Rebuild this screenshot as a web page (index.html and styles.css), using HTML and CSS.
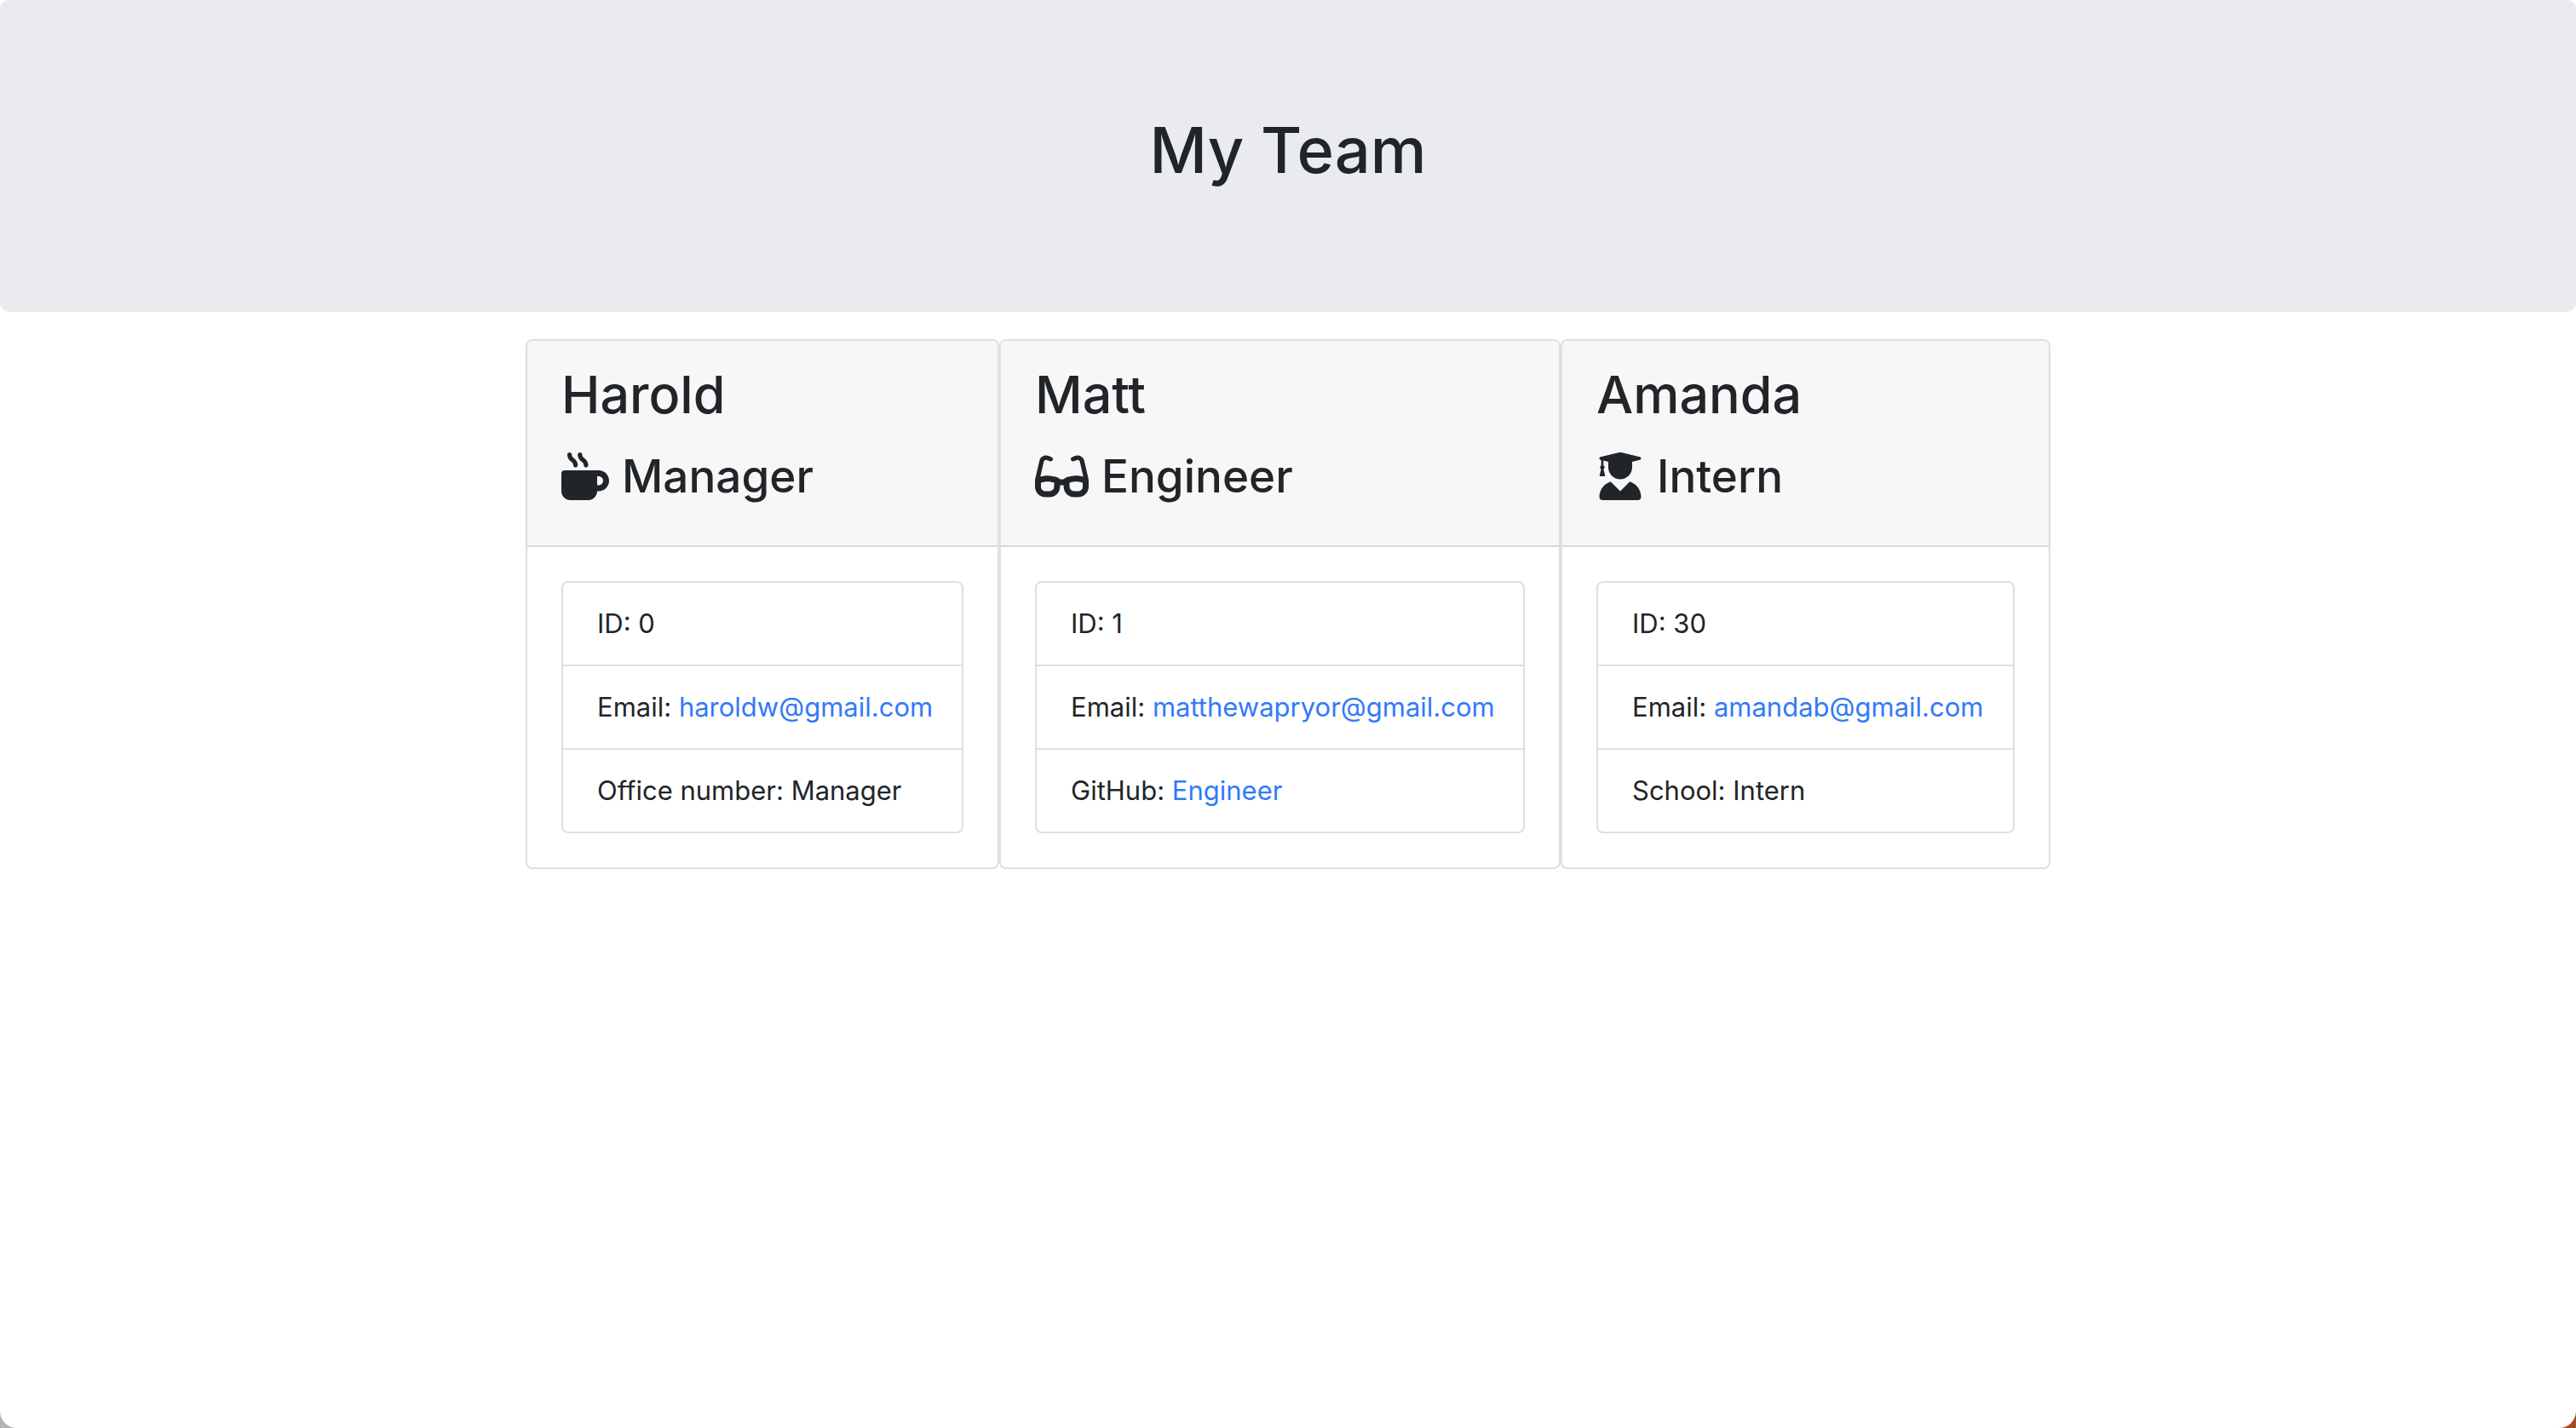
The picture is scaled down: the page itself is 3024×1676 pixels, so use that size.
FILE: index.html
```html
<!DOCTYPE html>
<html lang="en">
<head>
<meta charset="utf-8">
<title>My Team</title>
<link rel="stylesheet" href="styles.css">
</head>
<body>
<header class="banner"><h1 class="banner-title">My Team</h1></header>
<main class="team">
  <section class="card">
    <div class="card-header">
      <h2 class="name">Harold</h2>
      <h3 class="role"><svg class="icon" viewBox="0 0 512 512" aria-hidden="true"><path d="M88 0C74.7 0 64 10.7 64 24c0 38.9 23.4 59.4 39.1 73.1l1.1 1C120.5 112.3 128 119.9 128 136c0 13.3 10.7 24 24 24s24-10.7 24-24c0-38.9-23.4-59.4-39.1-73.1l-1.1-1C119.5 47.7 112 40.1 112 24c0-13.3-10.7-24-24-24zM32 192c-17.7 0-32 14.3-32 32V416c0 53 43 96 96 96H288c53 0 96-43 96-96h16c61.9 0 112-50.1 112-112s-50.1-112-112-112H352 32zm352 64h16c26.5 0 48 21.5 48 48s-21.5 48-48 48H384V256zM224 24c0-13.3-10.7-24-24-24s-24 10.7-24 24c0 38.9 23.4 59.4 39.1 73.1l1.1 1C232.5 112.3 240 119.9 240 136c0 13.3 10.7 24 24 24s24-10.7 24-24c0-38.9-23.4-59.4-39.1-73.1l-1.1-1C231.5 47.7 224 40.1 224 24z"/></svg>Manager</h3>
    </div>
    <div class="card-body">
      <ul class="facts">
        <li>ID: 0</li>
        <li>Email: <a href="mailto:haroldw@gmail.com">haroldw@gmail.com</a></li>
        <li>Office number: Manager</li>
      </ul>
    </div>
  </section>
  <section class="card">
    <div class="card-header">
      <h2 class="name">Matt</h2>
      <h3 class="role"><svg class="icon" viewBox="0 0 576 512" aria-hidden="true"><path d="M118.6 80c-11.5 0-21.4 7.9-24 19.1L57 260.3c20.5-6.2 48.3-12.3 78.7-12.3c32.3 0 61.8 6.9 82.8 13.5c10.6 3.3 19.3 6.7 25.4 9.2c3.1 1.3 5.5 2.4 7.3 3.2c7 3.4 12.7 8 16.4 14.1h40.6c3.7-6.1 9.4-10.7 16.4-14.1c1.8-.8 4.2-1.9 7.3-3.2c6.1-2.6 14.8-5.9 25.4-9.2c21-6.6 50.4-13.5 82.8-13.5c30.4 0 58.2 6.1 78.7 12.3L481.4 99.1c-2.6-11.2-12.6-19.1-24-19.1c-3.1 0-6.2 .6-9.2 1.8L416.9 94.3c-12.3 4.9-26.3-1.1-31.2-13.4s1.1-26.3 13.4-31.2l31.3-12.5c8.6-3.4 17.7-5.2 27-5.2c33.8 0 63.1 23.3 70.8 56.2l43.9 188c1.7 7.3 2.9 14.7 3.5 22.1c.3 1.9 .5 3.8 .5 5.7v64c0 61.9-50.1 112-112 112H419.7c-59.4 0-108.5-46.4-111.8-105.8L306.6 352H269.4l-1.2 22.2C264.9 433.6 215.8 480 156.3 480H112C50.1 480 0 429.9 0 368V304c0-1.9 .2-3.8 .5-5.7c.6-7.4 1.8-14.8 3.5-22.1l43.9-188C55.5 55.3 84.8 32 118.6 32c9.2 0 18.4 1.8 27 5.2l31.3 12.5c12.3 4.9 18.3 18.9 13.4 31.2s-18.9 18.3-31.2 13.4L127.8 81.8c-2.9-1.2-6-1.8-9.2-1.8zM64 325.4V368c0 26.5 21.5 48 48 48h44.3c25.5 0 46.5-19.9 47.9-45.3l2.5-45.6c-2.3-.8-4.9-1.7-7.5-2.5c-17.2-5.4-39.9-10.5-63.6-10.5c-23.7 0-46.2 5.1-63.2 10.5c-3.1 1-5.9 1.9-8.5 2.9zM512 368V325.4c-2.6-.9-5.5-1.9-8.5-2.9c-17-5.4-39.5-10.5-63.2-10.5c-23.7 0-46.4 5.1-63.6 10.5c-2.7 .8-5.2 1.7-7.5 2.5l2.5 45.6c1.4 25.4 22.5 45.3 47.9 45.3H464c26.5 0 48-21.5 48-48z"/></svg>Engineer</h3>
    </div>
    <div class="card-body">
      <ul class="facts">
        <li>ID: 1</li>
        <li>Email: <a href="mailto:matthewapryor@gmail.com">matthewapryor@gmail.com</a></li>
        <li>GitHub: <a href="https://github.com/Engineer">Engineer</a></li>
      </ul>
    </div>
  </section>
  <section class="card">
    <div class="card-header">
      <h2 class="name">Amanda</h2>
      <h3 class="role"><svg class="icon" viewBox="0 0 512 512" aria-hidden="true"><path d="M45.63 79.75L52 81.25v58.5C45 143.9 40 151.3 40 160c0 8.375 4.625 15.38 11.12 19.75L35.5 242C33.75 248.9 37.63 256 43.13 256h41.75c5.5 0 9.375-7.125 7.625-13.1L76.88 179.8C83.38 175.4 88 168.4 88 160c0-8.75-5-16.12-12-20.25V87.13L128 99.63V160c0 70.75 57.25 128 128 128s128-57.25 128-128V99.62l82.25-19.87c18.25-4.375 18.25-27 0-31.5l-190.4-46c-13-3-26.62-3-39.63 0l-190.6 46C27.5 52.63 27.5 75.38 45.63 79.75zM359.2 312.8L256 416l-103.2-103.2C82.87 335.1 32 400 32 477.3C32 496.5 47.53 512 66.67 512h378.7C464.5 512 480 496.5 480 477.3C480 400 429.1 335.1 359.2 312.8z"/></svg>Intern</h3>
    </div>
    <div class="card-body">
      <ul class="facts">
        <li>ID: 30</li>
        <li>Email: <a href="mailto:amandab@gmail.com">amandab@gmail.com</a></li>
        <li>School: Intern</li>
      </ul>
    </div>
  </section>
</main>
</body>
</html>
```
FILE: styles.css
```css
* { box-sizing: border-box; }
html { background: linear-gradient(90deg, #b4b4b4 50%, #a64b22 50%); }
body {
  min-height: 100vh;
  margin: 0;
  border-radius: 0 0 20px 20px;
  background: #fff;
  color: #212529;
  font-family: Inter, "Liberation Sans", sans-serif;
  font-size: 31px;
  line-height: 48px;
}
h1, h2, h3, ul { margin: 0; padding: 0; font-weight: 500; }
.banner {
  padding: 128px 64px 142px;
  border-radius: 10px;
  background: #e9ebef;
  text-align: center;
}
.banner-title { font-size: 74px; line-height: 96px; }
.team {
  display: grid;
  grid-template-columns: minmax(0, 556px) minmax(0, 659px) minmax(0, 575px);
  justify-content: center;
  padding: 32px 64px;
}
.card {
  border: 2px solid #dfdfdf;
  border-radius: 8px;
  overflow: hidden;
}
.card-header {
  display: grid;
  gap: 16px;
  padding: 24px 40px 40px;
  border-bottom: 2px solid #d8d8d8;
  background: #f7f7f7;
}
.name { font-size: 61px; line-height: 78px; }
.role {
  display: flex;
  align-items: center;
  gap: 15px;
  font-size: 53px;
  line-height: 82px;
}
.icon { height: 56px; fill: currentColor; }
.card-body { padding: 40px; }
.facts {
  border: 2px solid #dfdfdf;
  border-radius: 8px;
  list-style: none;
  font-weight: 400;
}
.facts li {
  padding: 24px 40px;
  white-space: nowrap;
}
.facts li + li { border-top: 2px solid #dfdfdf; }
a { color: #337af7; text-decoration: none; }
```
